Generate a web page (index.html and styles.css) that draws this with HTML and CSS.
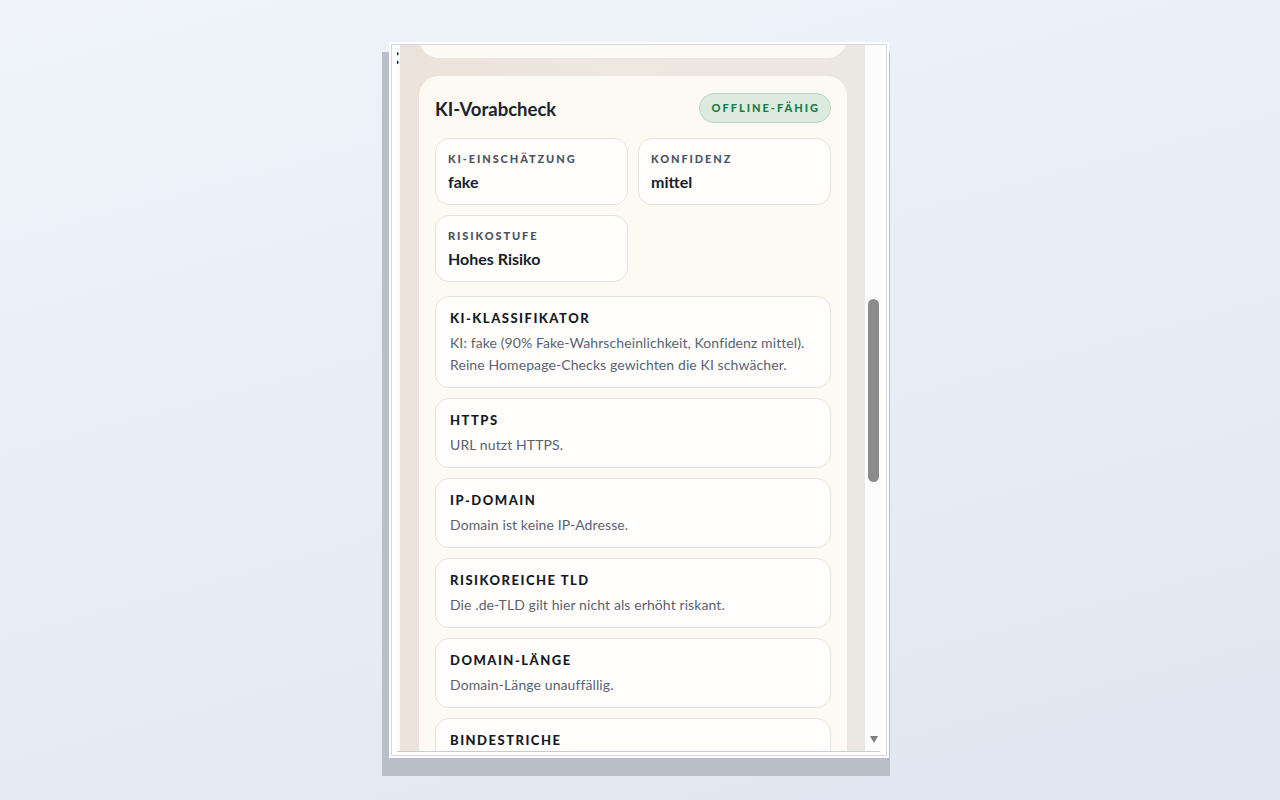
FILE: index.html
```html
<!DOCTYPE html>
<html lang="de">
<head>
  <meta charset="UTF-8">
  <meta name="viewport" content="width=device-width, initial-scale=1">
  <title>KI-Vorabcheck</title>
  <link rel="stylesheet" href="styles.css">
</head>
<body>
  <div class="frame">
    <div class="frame-inner">
      <div class="viewport">
        <div class="gutter">:</div>

        <div class="panel">
          <div class="scroll-content">
            <div class="section prev-section"></div>

            <section class="section">
              <div class="section-head">
                <h2>KI-Vorabcheck</h2>
                <span class="badge">Offline-fähig</span>
              </div>

              <div class="stats">
                <div class="stat">
                  <div class="stat-label">KI-Einschätzung</div>
                  <div class="stat-value">fake</div>
                </div>
                <div class="stat">
                  <div class="stat-label">Konfidenz</div>
                  <div class="stat-value">mittel</div>
                </div>
                <div class="stat">
                  <div class="stat-label">Risikostufe</div>
                  <div class="stat-value">Hohes Risiko</div>
                </div>
              </div>

              <div class="checks">
                <div class="check">
                  <div class="check-title">KI-Klassifikator</div>
                  <p>KI: fake (90% Fake-Wahrscheinlichkeit, Konfidenz mittel). Reine Homepage-Checks gewichten die KI schwächer.</p>
                </div>
                <div class="check">
                  <div class="check-title">HTTPS</div>
                  <p>URL nutzt HTTPS.</p>
                </div>
                <div class="check">
                  <div class="check-title">IP-Domain</div>
                  <p>Domain ist keine IP-Adresse.</p>
                </div>
                <div class="check">
                  <div class="check-title">Risikoreiche TLD</div>
                  <p>Die .de-TLD gilt hier nicht als erhöht riskant.</p>
                </div>
                <div class="check">
                  <div class="check-title">Domain-Länge</div>
                  <p>Domain-Länge unauffällig.</p>
                </div>
                <div class="check check-last">
                  <div class="check-title">Bindestriche</div>
                </div>
              </div>
            </section>
          </div>
        </div>

        <div class="scrollbar">
          <div class="thumb"></div>
          <div class="arrow-down"></div>
        </div>
      </div>
    </div>
  </div>
</body>
</html>
```

FILE: styles.css
```css
html, body {
  height: 100%;
}

body {
  margin: 0;
  font-family: 'Lato', 'Segoe UI', sans-serif;
  background: linear-gradient(165deg, #f0f3fa, #e0e7f2);
  color: #161c27;
  overflow: hidden;
}

/* screenshot frame */
.frame {
  margin: 42px 0 0 389px;
  width: 500px;
  height: 716px;
  box-sizing: border-box;
  padding: 2px;
  background: #fff;
  box-shadow: -3px 14px 0 4px #b9bec9;
}

.frame-inner {
  height: 100%;
  box-sizing: border-box;
  border: 1px solid #d3d9e8;
  padding: 0 6px 4px 5px;
}

.viewport {
  display: flex;
  height: 100%;
  border-bottom: 1px solid #c9cbce;
  overflow: hidden;
}

.gutter {
  width: 3px;
  flex: none;
  overflow: hidden;
  font-size: 22px;
  line-height: 22px;
  font-weight: 700;
  color: #222;
  background: #fbfbfb;
  text-indent: -3px;
}

.panel {
  width: 465px;
  flex: none;
  overflow: hidden;
  background: linear-gradient(90deg, #ece2da, #ede8e0 45%, #ebe8e1);
}

.scroll-content {
  margin-top: -47px;
  padding: 0 18px 0 19px;
}

.section {
  background: #fdf9f3;
  border-radius: 20px;
  padding: 17px 16px 16px;
}

.prev-section {
  height: 27px;
  margin-bottom: 18px;
}

.section-head {
  display: flex;
  align-items: center;
  justify-content: space-between;
  margin-bottom: 15px;
}

.section-head h2 {
  margin: 1px 0 0;
  font-size: 18.5px;
  font-weight: 700;
  color: #1c2230;
}

.badge {
  display: inline-block;
  height: 28px;
  line-height: 28px;
  padding: 0 10px 0 12px;
  border: 1px solid #b6d7bf;
  border-radius: 15px;
  background: #dcebdd;
  color: #1c7a46;
  font-size: 11px;
  font-weight: 900;
  letter-spacing: 2px;
  text-transform: uppercase;
}

.stats {
  display: grid;
  grid-template-columns: 1fr 1fr;
  gap: 10px;
}

.stat {
  background: #fffefd;
  border: 1px solid #e5e3de;
  border-radius: 14px;
  padding: 13px 12px 12px;
}

.stat-label {
  font-size: 11px;
  line-height: 14px;
  font-weight: 900;
  letter-spacing: 1.9px;
  text-transform: uppercase;
  color: #4a5362;
  margin-bottom: 6px;
}

.stat-value {
  font-size: 16px;
  line-height: 20px;
  font-weight: 700;
  color: #171d29;
}

.checks {
  display: flex;
  flex-direction: column;
  gap: 10px;
  margin-top: 14px;
}

.check {
  background: #fffefd;
  border: 1px solid #e5e3de;
  border-radius: 14px;
  padding: 13px 14px 11px;
}

.check-last {
  min-height: 60px;
}

.check-title {
  font-size: 13px;
  line-height: 16px;
  font-weight: 900;
  letter-spacing: 1.5px;
  text-transform: uppercase;
  color: #151b26;
  margin-bottom: 6px;
}

.check p {
  margin: 0;
  font-size: 14px;
  line-height: 22px;
  letter-spacing: 0.1px;
  color: #5a6271;
}

/* fake scrollbar of the captured window */
.scrollbar {
  width: 15px;
  flex: none;
  position: relative;
  background: #fbfbfb;
}

.thumb {
  margin: 254px 0 0 3px;
  width: 11px;
  height: 183px;
  border-radius: 6px;
  background: #8b8b8b;
}

.arrow-down {
  position: absolute;
  left: 5px;
  bottom: 8px;
  width: 0;
  height: 0;
  border-left: 4.5px solid transparent;
  border-right: 4.5px solid transparent;
  border-top: 7px solid #7f7f7f;
}
```
